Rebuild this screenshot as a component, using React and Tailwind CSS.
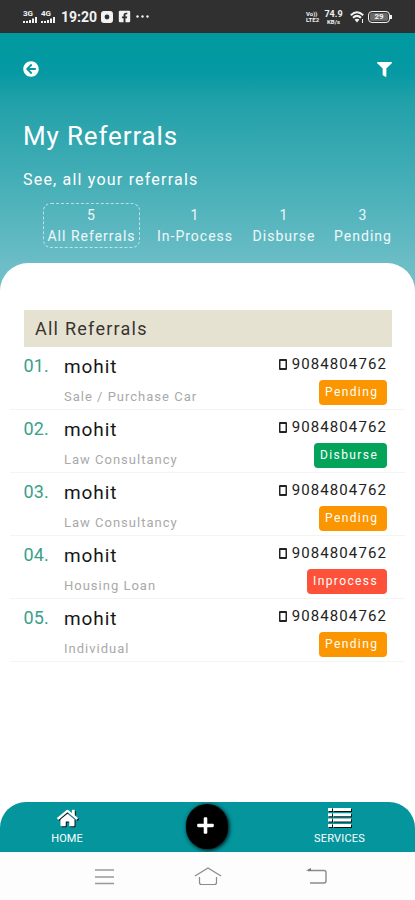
import React from 'react';
import { FaHome, FaPlus, FaFilter, FaArrowCircleLeft, FaFacebookSquare } from 'react-icons/fa';

const tabs = [
  { name: 'All Referrals', count: 5, box: 'w-[97px] border border-dashed border-white/60 rounded-lg' },
  { name: 'In-Process', count: 1, box: 'w-[80px] ml-[15px] border border-transparent' },
  { name: 'Disburse', count: 1, box: 'w-[66px] ml-[16px] border border-transparent' },
  { name: 'Pending', count: 3, box: 'w-[62px] ml-[15px] border border-transparent' },
];

const referrals = [
  { id: '01.', name: 'mohit', service: 'Sale / Purchase Car', phone: '9084804762', status: 'Pending' },
  { id: '02.', name: 'mohit', service: 'Law Consultancy', phone: '9084804762', status: 'Disburse' },
  { id: '03.', name: 'mohit', service: 'Law Consultancy', phone: '9084804762', status: 'Pending' },
  { id: '04.', name: 'mohit', service: 'Housing Loan', phone: '9084804762', status: 'Inprocess' },
  { id: '05.', name: 'mohit', service: 'Individual', phone: '9084804762', status: 'Pending' },
];

const badgeStyles = {
  Pending: 'bg-[#fb9600] w-[68px]',
  Disburse: 'bg-[#04a35a] w-[73px]',
  Inprocess: 'bg-[#fd513a] w-[80px]',
};

const Signal = ({ label, className }) => (
  <div className={`flex flex-col items-start ${className || ''}`}>
    <span className="text-[8px] leading-[6px] font-bold">{label}</span>
    <svg width="14" height="6" viewBox="0 0 14 6" fill="currentColor">
      <path d="M0 4h2v2H0zM3 4h2v2H3zM6 3h2v3H6zM9 1.5h2V6H9zM12 0h2v6h-2z" />
    </svg>
  </div>
);

const StatusBar = () => (
  <div className="h-[33px] bg-[#303030] text-[#f2f2f2] flex items-center pl-[23px] pr-[23px]">
    <Signal label="3G" />
    <Signal label="4G" className="ml-[4px]" />
    <span className="ml-[6px] w-[36px] text-[14px] leading-[14px] font-bold whitespace-nowrap">19:20</span>
    <svg className="ml-[4px]" width="12" height="12" viewBox="0 0 12 12">
      <rect width="12" height="12" rx="3" fill="#f2f2f2" />
      <circle cx="6" cy="6" r="2.4" fill="#303030" />
    </svg>
    <FaFacebookSquare className="ml-[5px] w-[13px] h-[13px]" />
    <svg className="ml-[5px]" width="13" height="3" viewBox="0 0 13 3" fill="currentColor">
      <circle cx="1.5" cy="1.5" r="1.2" />
      <circle cx="6.5" cy="1.5" r="1.2" />
      <circle cx="11.5" cy="1.5" r="1.2" />
    </svg>
    <div className="ml-auto w-[15px] flex flex-col text-[6px] leading-[6px] font-bold">
      <span>Vo))</span>
      <span>LTE2</span>
    </div>
    <div className="ml-[3px] w-[19px] flex flex-col items-center font-bold">
      <span className="text-[9px] leading-[9px]">74.9</span>
      <span className="text-[6px] leading-[5px]">KB/s</span>
    </div>
    <svg className="ml-[7px]" width="14" height="12" viewBox="0 0 14 12" fill="none" stroke="currentColor" strokeWidth="2">
      <path d="M.8 4.2Q7-1.8 13.2 4.2M3 6.8Q7 3 11 6.8" />
      <path d="M4.5 8.5Q7 7 9.5 8.5L7 11.5z" fill="currentColor" stroke="none" />
      <path d="M12.5 8v4" strokeWidth="1" />
    </svg>
    <div className="ml-[4px] w-[22px] h-[12px] rounded-[4px] border border-[#f2f2f2] p-px">
      <div className="h-full rounded-[2px] bg-[#6a6a6a] text-[8px] leading-[8px] font-bold text-center">29</div>
    </div>
    <div className="w-[2px] h-[4px] bg-[#f2f2f2]" />
  </div>
);

const Header = () => (
  <div className="h-[270px] bg-[linear-gradient(180deg,#00999f_0px,#0499a3_38px,#20a0a8_66px,#70bfc8_242px)] text-white">
    <div className="flex justify-between pt-[28px] pl-[23px] pr-[23px]">
      <FaArrowCircleLeft className="w-[16px] h-[16px]" />
      <FaFilter className="w-[15px] h-[15px] mt-px" />
    </div>
    <h1 className="mt-[43px] ml-[23px] text-[26px] leading-[32px] tracking-[0.85px]">My Referrals</h1>
    <p className="mt-[16px] ml-[23px] text-[16px] leading-[24px] tracking-[1.2px]">See, all your referrals</p>
    <div className="flex mt-[11px] ml-[43px]">
      {tabs.map((tab) => (
        <div key={tab.name} className={`h-[45px] pt-px flex flex-col items-center text-[14px] leading-[21px] tracking-[1px] whitespace-nowrap text-white/90 ${tab.box}`}>
          <span>{tab.count}</span>
          <span>{tab.name}</span>
        </div>
      ))}
    </div>
  </div>
);

const ReferralRow = ({ item }) => (
  <div className="h-[63px] mx-[10px] pl-[13.5px] pr-[18px] border-b border-[#f4f4f4] flex">
    <span className="w-[40.5px] pt-[8px] text-[18px] leading-[22px] tracking-[0.1px] text-[#3b9f88]">{item.id}</span>
    <div className="flex-1">
      <p className="pt-[8px] text-[19px] leading-[24px] tracking-[0.9px] text-[#161616]">{item.name}</p>
      <p className="mt-[9px] text-[13px] leading-[18px] tracking-[1px] text-[#a9a9a9]">{item.service}</p>
    </div>
    <div className="flex flex-col items-end">
      <div className="flex items-center pt-[7px]">
        <svg className="mr-[5px]" width="8" height="11" viewBox="0 0 8 11">
          <path d="M1 0h6a1 1 0 0 1 1 1v9a1 1 0 0 1-1 1H1a1 1 0 0 1-1-1V1a1 1 0 0 1 1-1zM1.5 2v7h5V2z" fill="#222" fillRule="evenodd" />
        </svg>
        <span className="text-[15px] leading-[20px] tracking-[1.1px] text-[#222222]">{item.phone}</span>
      </div>
      <span className={`mt-[6px] h-[25px] rounded-[4px] pl-[6px] text-[12px] leading-[25px] tracking-[1.4px] text-white ${badgeStyles[item.status]}`}>
        {item.status}
      </span>
    </div>
  </div>
);

const BottomNav = () => (
  <div className="h-[50px] bg-[#04959d] rounded-t-[26px] flex text-white">
    <div className="w-[134px] flex flex-col items-center pt-[6px]">
      <FaHome className="w-[21px] h-[20px] drop-shadow-[1px_1px_0px_#111]" />
      <span className="mt-[3px] text-[11px] leading-[16px]">HOME</span>
    </div>
    <div className="w-[145px] flex justify-center pt-[2px]">
      <div className="w-[42px] h-[45px] rounded-full bg-black flex items-center justify-center shadow-[1px_1px_4px_#000]">
        <FaPlus className="w-[19px] h-[19px] -mt-[3px] -ml-[2px]" />
      </div>
    </div>
    <div className="w-[121px] flex flex-col items-center pt-[6px]">
      <svg width="24" height="20" viewBox="0 0 24 20" className="drop-shadow-[1px_1px_0px_#111]" fill="currentColor">
        <path d="M0 0h4v3H0zM5 0h18v3H5zM0 5.3h4v3H0zM5 5.3h18v3H5zM0 10.6h4v3H0zM5 10.6h18v3H5zM0 16h4v3H0zM5 16h18v3H5z" />
      </svg>
      <span className="mt-[3px] text-[11px] leading-[16px] tracking-[0.2px]">SERVICES</span>
    </div>
  </div>
);

const SystemNav = () => (
  <div className="h-[48px] bg-[#fdfdfd] flex pt-[14px] pl-[94px]">
    <svg width="21" height="22" viewBox="0 0 21 22" fill="none" stroke="#999" strokeWidth="1.4">
      <path d="M1 4h19M1 11h19M1 17.5h19" />
    </svg>
    <svg className="ml-[79px]" width="28" height="22" viewBox="0 0 28 22" fill="none" stroke="#8b8b8b" strokeWidth="1.2">
      <path d="M1 10 14 2l13 8M5.5 11v5.5q0 2 2 2h13q2 0 2-2V11" />
    </svg>
    <svg className="ml-[84px]" width="22" height="22" viewBox="0 0 22 22" fill="none" stroke="#8b8b8b" strokeWidth="1.4">
      <path d="M2 4.5h16q2 0 2 2v8.500q0 2-2 2H4" />
      <path d="M0 4.5 5 2v3z" fill="#777" stroke="none" />
    </svg>
  </div>
);

const App = () => {
  return (
    <div className="w-full h-[900px] bg-white flex flex-col overflow-hidden font-['Roboto',sans-serif]">
      <StatusBar />
      <Header />
      <div className="relative -mt-[40px] flex-1 bg-white rounded-t-[28px] pt-[47px]">
        <div className="mx-[24px] mr-[23px] h-[37px] bg-[#e6e2d2] pl-[11px] text-[18px] leading-[37px] tracking-[1.25px] text-[#37332e]">
          All Referrals
        </div>
        {referrals.map((item) => (
          <ReferralRow key={item.id} item={item} />
        ))}
      </div>
      <BottomNav />
      <SystemNav />
    </div>
  );
};

export default App;
